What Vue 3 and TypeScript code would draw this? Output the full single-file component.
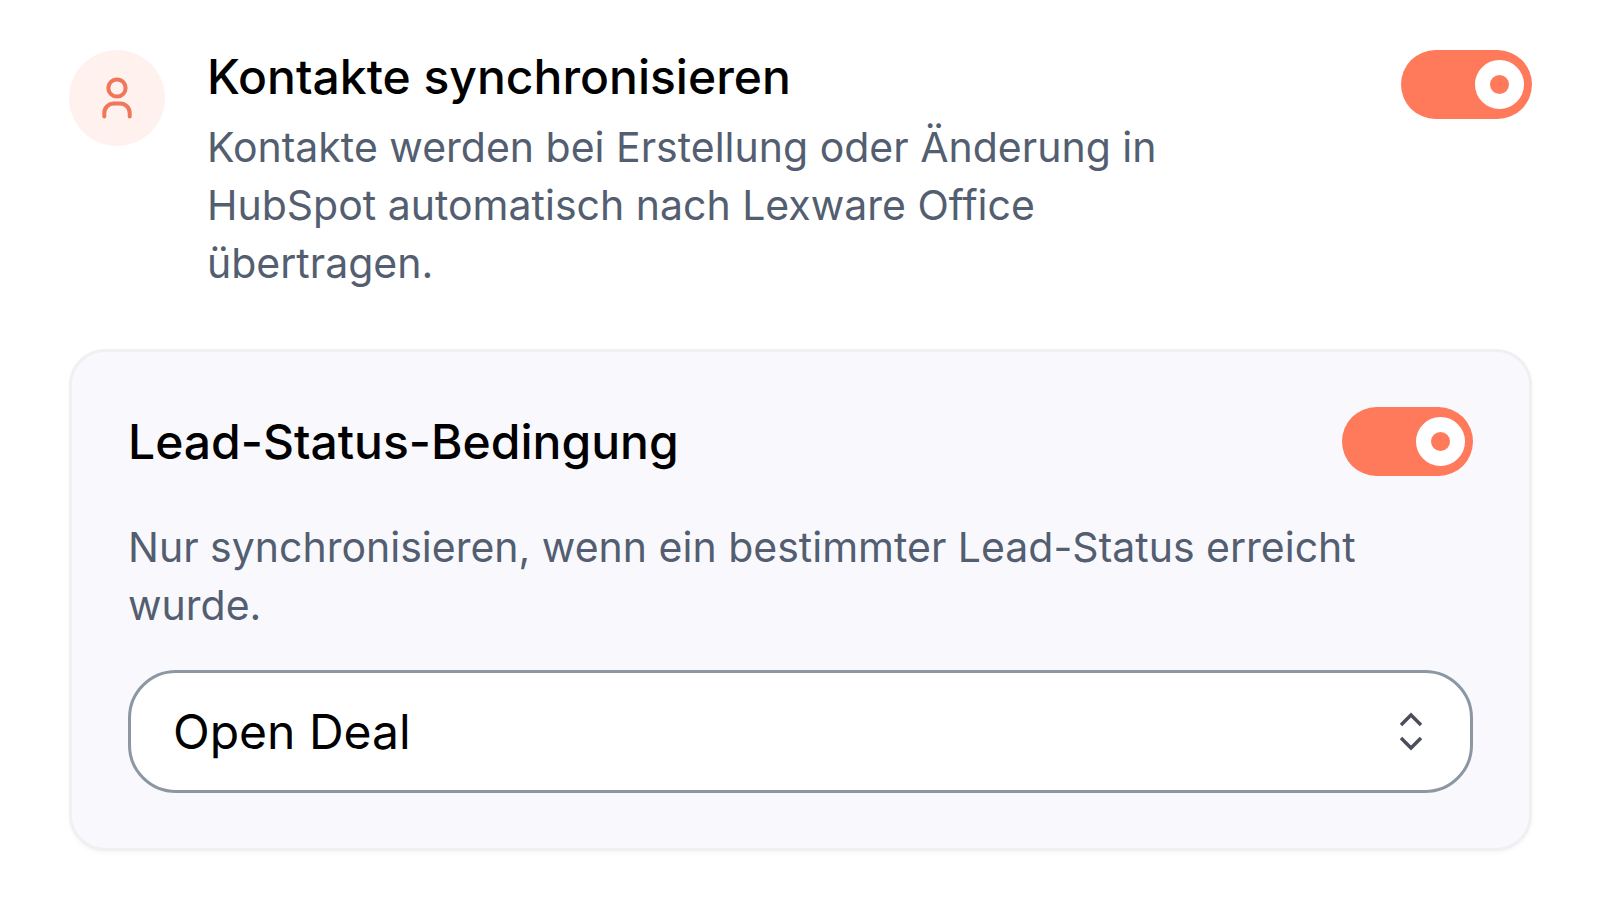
<script setup lang="ts">
import { ref } from 'vue'

const syncContacts = ref<boolean>(true)
const useLeadStatus = ref<boolean>(true)
const leadStatus = ref<string>('Open Deal')
const statuses: string[] = ['Open Deal']
</script>

<template>
  <main class="settings">
    <section class="row">
      <span class="avatar">
        <svg viewBox="0 0 96 96" aria-hidden="true">
          <circle cx="48" cy="38" r="8.6" />
          <path d="M35.3 66.5V63a9.6 9.6 0 0 1 9.6-9.6h6.2a9.6 9.6 0 0 1 9.6 9.6v3.5" />
        </svg>
      </span>
      <div class="copy">
        <label class="title" for="sync-contacts">Kontakte synchronisieren</label>
        <p id="sync-hint" class="hint">
          Kontakte werden bei Erstellung oder Änderung in HubSpot automatisch nach Lexware Office
          übertragen.
        </p>
      </div>
      <input
        id="sync-contacts"
        v-model="syncContacts"
        class="switch"
        type="checkbox"
        role="switch"
        aria-describedby="sync-hint"
      />
    </section>

    <section class="card">
      <div class="card-head">
        <label class="title" for="lead-toggle">Lead-Status-Bedingung</label>
        <input id="lead-toggle" v-model="useLeadStatus" class="switch" type="checkbox" role="switch" />
      </div>
      <label class="hint" for="lead-status">
        Nur synchronisieren, wenn ein bestimmter Lead-Status erreicht wurde.
      </label>
      <div class="select-box">
        <select id="lead-status" v-model="leadStatus" :disabled="!useLeadStatus">
          <option v-for="status in statuses" :key="status" :value="status">{{ status }}</option>
        </select>
        <svg class="chevrons" viewBox="0 0 24 40" aria-hidden="true">
          <path d="M2 14 12 4l10 10M2 27l10 10 10-10" />
        </svg>
      </div>
    </section>
  </main>
</template>

<style>
body {
  margin: 0;
  background: #fff;
}
</style>

<style scoped>
.settings {
  box-sizing: border-box;
  display: flex;
  flex-direction: column;
  gap: 57px;
  padding: 50px 68px 48px 69px;
  font-family: Inter, "Liberation Sans", sans-serif;
  color: #000;
}

.row {
  display: flex;
  align-items: flex-start;
}

.avatar {
  flex: none;
  width: 96px;
  height: 96px;
  margin-right: 42px;
  border-radius: 50%;
  background: #fff1ee;
}

.avatar svg {
  display: block;
  fill: none;
  stroke: #f0775a;
  stroke-width: 4;
  stroke-linecap: round;
}

.copy {
  flex: 1;
  max-width: 1020px;
}

.title {
  display: block;
  font-size: 48px;
  font-weight: 500;
  line-height: 54px;
}

.hint {
  display: block;
  margin: 0;
  font-size: 41px;
  line-height: 58px;
  color: #535e70;
}

.copy .hint {
  margin-top: 14px;
}

.switch {
  appearance: none;
  box-sizing: border-box;
  display: flex;
  align-items: center;
  flex: none;
  width: 131px;
  height: 69px;
  margin: 0 0 0 auto;
  padding: 0 8px;
  border-radius: 35px;
  background: #c5cad3;
  cursor: pointer;
}

.switch::before {
  content: "";
  width: 19px;
  height: 19px;
  border: 15px solid #fff;
  border-radius: 50%;
}

.switch:checked {
  justify-content: flex-end;
  background: #ff7a5a;
}

.card {
  padding: 55px 56px;
  border: 3px solid #f0f0f2;
  border-radius: 36px;
  background: #f9f9fd;
  box-shadow: 0 2px 4px rgba(0, 0, 0, 0.04);
}

.card-head {
  display: flex;
  align-items: center;
  margin-bottom: 42px;
}

.select-box {
  position: relative;
  margin-top: 36px;
}

select {
  appearance: none;
  display: block;
  box-sizing: border-box;
  width: 100%;
  height: 123px;
  padding: 0 96px 0 42px;
  border: 3px solid #8c97a3;
  border-radius: 48px;
  background: #fff;
  color: #000;
  opacity: 1;
  font-family: inherit;
  font-size: 48px;
}

.chevrons {
  position: absolute;
  top: 41px;
  right: 50px;
  width: 24px;
  height: 40px;
  fill: none;
  stroke: #4b4d5c;
  stroke-width: 3.4;
  pointer-events: none;
}
</style>
